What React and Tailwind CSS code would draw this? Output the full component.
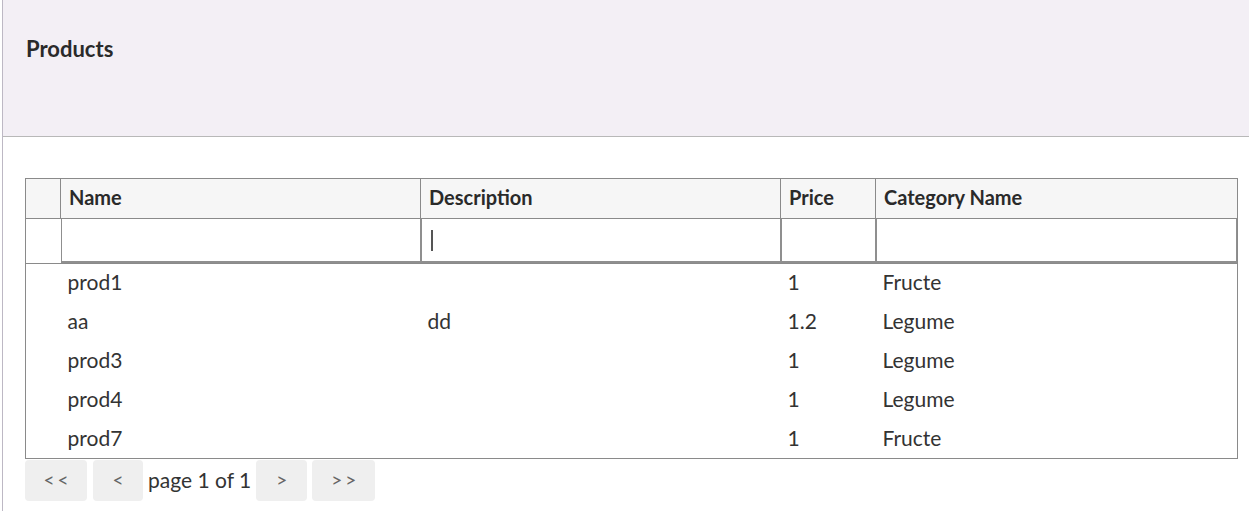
import React from 'react';

const rows = [
    { name: 'prod1', description: '', price: '1', category: 'Fructe' },
    { name: 'aa', description: 'dd', price: '1.2', category: 'Legume' },
    { name: 'prod3', description: '', price: '1', category: 'Legume' },
    { name: 'prod4', description: '', price: '1', category: 'Legume' },
    { name: 'prod7', description: '', price: '1', category: 'Fructe' },
];

const columns = [
    { key: 'name', label: 'Name', width: 'w-[360px]' },
    { key: 'description', label: 'Description', width: 'w-[360px]' },
    { key: 'price', label: 'Price', width: 'w-[95px]' },
    { key: 'category', label: 'Category Name', width: 'w-[362px]' },
];

const PageButton = ({ children, className }) => (
    <button className={`h-[41px] rounded-[4px] bg-[#efefef] text-[19px] text-[#666] tracking-[3px] ${className}`}>
        {children}
    </button>
);

const App = () => {
    return (
        <div className="ml-[2px] min-h-[511px] border-l border-[#bdb8c4] font-['Lato',sans-serif] text-[#333]">
            <div className="h-[137px] bg-[#f3eff5] border-b border-[#b8b8b8] pl-[23px] pt-[35px]">
                <h1 className="text-[22px] font-bold text-[#2a2a2a] leading-[28px]">Products</h1>
            </div>

            <div className="pl-[22px] pt-[41px]">
                <table className="w-[1213px] border-collapse border border-[#8a8a8a] table-fixed text-[21px]">
                    <thead>
                        <tr className="h-[40px] bg-[#f6f6f6]">
                            <th className="w-[35px] border border-[#8a8a8a]"></th>
                            {columns.map((c) => (
                                <th key={c.key} className={`${c.width} border border-[#8a8a8a] text-left font-bold text-[20px] text-[#2a2a2a] pl-[8px] pb-[3px]`}>
                                    {c.label}
                                </th>
                            ))}
                        </tr>
                        <tr className="h-[45px] border-b border-[#8a8a8a]">
                            <th className="p-0"></th>
                            {columns.map((c) => (
                                <th key={c.key} className="p-0 h-[45px]">
                                    <div className="h-[44px] border border-t-0 border-b-2 border-[#8f8f8f] bg-white flex items-center pl-[9px]">
                                        {c.key === 'description' && <span className="w-[2px] h-[21px] bg-[#555]"></span>}
                                    </div>
                                </th>
                            ))}
                        </tr>
                    </thead>
                    <tbody>
                        {rows.map((r, i) => (
                            <tr key={i} className="h-[39px]">
                                <td></td>
                                {columns.map((c) => (
                                    <td key={c.key} className="pl-[7px] pb-[3px] text-[#333]">{r[c.key]}</td>
                                ))}
                            </tr>
                        ))}
                    </tbody>
                </table>

                <div className="flex items-center mt-[1px]">
                    <PageButton className="w-[62px] pl-[3px]">&lt;&lt;</PageButton>
                    <PageButton className="w-[50px] ml-[6px] pl-[3px]">&lt;</PageButton>
                    <span className="text-[21px] text-[#333] mx-[5px] pb-[2px]">page 1 of 1</span>
                    <PageButton className="w-[51px] pl-[3px]">&gt;</PageButton>
                    <PageButton className="w-[63px] ml-[5px] pl-[3px]">&gt;&gt;</PageButton>
                </div>
            </div>
        </div>
    );
};

export default App;
